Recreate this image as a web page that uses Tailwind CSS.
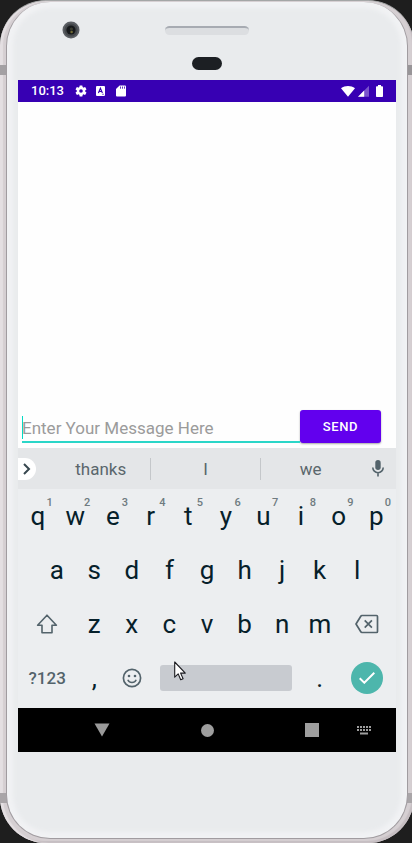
<!DOCTYPE html>
<html lang="en">
<head>
<meta charset="utf-8">
<meta name="viewport" content="width=device-width, initial-scale=1">
<title>Message</title>
<script src="https://cdn.jsdelivr.net/npm/@tailwindcss/browser@4"></script>
</head>
<body class="bg-[#1e1e1e] overflow-x-hidden font-['Roboto','Noto_Sans',sans-serif]">
<!-- Metal frame -->
<div class="relative -mr-0.5 min-h-screen flex flex-col border-t border-[#a4a6a6] rounded-[46px] bg-[#d5cfd2] pl-1.5 pr-1.5 pt-px pb-1 shadow-[inset_3px_0_1px_#e4dfe2,inset_-2px_-2px_1px_#c5bdc1]">
  <span class="absolute left-0 top-16 w-1.5 h-2.5 bg-[#a3a0a3]"></span>
  <span class="absolute right-0 top-16 w-1.5 h-2.5 bg-[#989598]"></span>
  <span class="absolute left-0 bottom-10 w-2 h-2.5 bg-[#a9a5a8]"></span>
  <span class="absolute right-0 bottom-10 w-2 h-2.5 bg-[#a9a5a8]"></span>
  <!-- Front panel -->
  <div class="relative grow flex flex-col rounded-[44px] border-x border-b border-[#a19ca0] bg-[#e9ebed] px-[11px] shadow-[inset_0_0_4px_6px_#f1f2f4]">
    <header class="grid grid-cols-3 h-[78px]">
      <div class="pl-11 pt-[19px]">
        <svg class="size-[18px]" viewBox="0 0 18 18"><circle cx="9" cy="9" r="8.5" fill="#5b5e63"/><circle cx="9" cy="9" r="6.6" fill="#45484c"/><circle cx="9" cy="9" r="4.6" fill="#17191b"/><circle cx="9.4" cy="8" r="1.6" fill="#3b3c30"/><circle cx="9.6" cy="11" r="1.3" fill="#716a35"/></svg>
      </div>
      <div class="flex flex-col items-center pt-6 gap-[22px]">
        <span class="w-[84px] h-[9px] rounded-full bg-[#dcdee1] border-t-2 border-[#a7abb2]"></span>
        <span class="w-[30px] h-[13px] rounded-full bg-[#1c1f23]"></span>
      </div>
    </header>

    <main class="flex flex-col grow">
      <!-- Status bar -->
      <div class="flex items-center h-[22px] bg-[#3700b3] pl-[13px] pr-[13px] text-white">
        <time class="text-[13px] font-medium leading-5 mr-2.5">10:13</time>
        <svg class="size-[14px] mr-2" viewBox="0 0 24 24" fill="#fff"><path d="M19.14 12.94c.04-.3.06-.61.06-.94s-.02-.64-.07-.94l2.03-1.58a.5.5 0 0 0 .12-.61l-1.92-3.32a.49.49 0 0 0-.59-.22l-2.39.96a7 7 0 0 0-1.62-.94l-.36-2.54a.48.48 0 0 0-.48-.41h-3.84a.47.47 0 0 0-.47.41l-.36 2.54c-.59.24-1.13.57-1.62.94l-2.39-.96a.48.48 0 0 0-.59.22L2.74 8.87a.47.47 0 0 0 .12.61l2.03 1.58a6.4 6.4 0 0 0 0 1.88l-2.03 1.58a.5.5 0 0 0-.12.61l1.92 3.32c.12.22.37.29.59.22l2.39-.96c.5.38 1.03.7 1.62.94l.36 2.54c.05.24.24.41.48.41h3.84c.24 0 .44-.17.47-.41l.36-2.54c.59-.24 1.13-.56 1.62-.94l2.39.96c.22.08.47 0 .59-.22l1.92-3.32a.47.47 0 0 0-.12-.61zM12 15.1a3.1 3.1 0 1 1 0-6.200 3.100 3.100 0 0 1 0 6.200z"/></svg>
        <svg class="w-[9px] h-2.5 mr-[11px]" viewBox="0 0 9 10" fill="none" stroke="#3700b3"><rect width="9" height="10" rx="1" fill="#fff" stroke="none"/><path d="M2.4 7 4.4 2.2 6.400 7M3 5.500h2.800M6.400 8.300h1.200" stroke-width="1.100"/></svg>
        <svg class="w-[10px] h-3" viewBox="0 0 10 12"><path d="M3.600.500H9a1 1 0 0 1 1 1v9a1 1 0 0 1-1 1H1a1 1 0 0 1-1-1V4z" fill="#fff"/><path d="M4.500 1.500v2.200M6.500 1.500v2.200M8.500 1.500v2.200" stroke="#3700b3" stroke-width=".8"/></svg>
        <svg class="w-[14px] h-3 ml-auto mr-[3px]" viewBox="0 0 14 12" fill="#fff"><path d="M0 3.200C4 .2 10 .2 14 3.200L7 11.800z"/></svg>
        <svg class="w-[11px] h-3 mr-[7px]" viewBox="0 0 11 12"><path d="M11 .8V11.800H0z" fill="#7a54cd"/><path d="M6.200 5.600v6.200H0z" fill="#fff"/></svg>
        <svg class="w-[7px] h-3" viewBox="0 0 7 12" fill="#fff"><path d="M2 0h3v1.200h1.200a.8.8 0 0 1 .8.8v9.200a.8.8 0 0 1-.8.8H.8a.8.8 0 0 1-.8-.8V2a.8.8 0 0 1 .8-.8H2z"/></svg>
      </div>

      <!-- Conversation and message box -->
      <form class="grow min-h-[346px] bg-[#fefefe] flex items-end pl-1 pr-[15px] pb-[5px]" onsubmit="return false">
        <div class="relative grow h-[27px] border-b-2 border-[#2bd6c8]">
          <span class="absolute left-0 top-0 w-px h-[23px] bg-[#03dac5]"></span>
          <input type="text" aria-label="Message" placeholder="Enter Your Message Here" class="block w-full h-6 bg-transparent text-[17px] leading-6 text-gray-900 placeholder:text-[#9b9b9b] outline-none">
        </div>
        <button type="submit" class="w-[81px] h-[33px] rounded-[3px] bg-[#6200ee] text-white text-[13px] font-medium leading-5 tracking-wider shadow-[0_1px_2px_rgba(0,0,0,0.35)]">SEND</button>
      </form>

      <!-- Suggestions -->
      <div class="flex items-center h-[41px] bg-[#e4e6e8] text-[17px] leading-[22px] text-[#5a666c]">
        <button aria-label="Expand toolbar" class="w-[18px] h-[22px] rounded-r-full bg-white flex items-center justify-center"><svg class="w-2 h-3" viewBox="0 0 8 12" fill="none" stroke="#37474f" stroke-width="2"><path d="M1 1l5 5-5 5"/></svg></button>
        <div class="grow grid grid-cols-[8fr_9fr_8fr] pl-4">
          <button class="h-[22px] border-r border-[#c4c7ca]">thanks</button>
          <button class="h-[22px] border-r border-[#c4c7ca]">I</button>
          <button class="h-[22px]">we</button>
        </div>
        <button aria-label="Voice input" class="w-9 flex justify-center"><svg class="w-3 h-[17px]" viewBox="0 0 12 17"><rect x="3.300" y="0" width="5.400" height="10" rx="2.700" fill="#53636b"/><path d="M.8 7.500a5.200 5.200 0 0 0 10.400 0M6 12.500V16.500" fill="none" stroke="#53636b" stroke-width="1.600"/></svg></button>
      </div>

      <!-- Keyboard -->
      <div class="bg-[#eceef0] px-px pb-[3px] text-[26px] leading-8 text-[#06202a]">
        <div class="grid grid-cols-10 h-[54px]">
          <button class="relative">q<sup class="absolute right-0 top-2 w-3.5 text-[11px] leading-3 font-medium text-[#6f7b80]">1</sup></button>
          <button class="relative">w<sup class="absolute right-0 top-2 w-3.5 text-[11px] leading-3 font-medium text-[#6f7b80]">2</sup></button>
          <button class="relative">e<sup class="absolute right-0 top-2 w-3.5 text-[11px] leading-3 font-medium text-[#6f7b80]">3</sup></button>
          <button class="relative">r<sup class="absolute right-0 top-2 w-3.5 text-[11px] leading-3 font-medium text-[#6f7b80]">4</sup></button>
          <button class="relative">t<sup class="absolute right-0 top-2 w-3.5 text-[11px] leading-3 font-medium text-[#6f7b80]">5</sup></button>
          <button class="relative">y<sup class="absolute right-0 top-2 w-3.5 text-[11px] leading-3 font-medium text-[#6f7b80]">6</sup></button>
          <button class="relative">u<sup class="absolute right-0 top-2 w-3.5 text-[11px] leading-3 font-medium text-[#6f7b80]">7</sup></button>
          <button class="relative">i<sup class="absolute right-0 top-2 w-3.5 text-[11px] leading-3 font-medium text-[#6f7b80]">8</sup></button>
          <button class="relative">o<sup class="absolute right-0 top-2 w-3.5 text-[11px] leading-3 font-medium text-[#6f7b80]">9</sup></button>
          <button class="relative">p<sup class="absolute right-0 top-2 w-3.5 text-[11px] leading-3 font-medium text-[#6f7b80]">0</sup></button>
        </div>
        <div class="grid grid-cols-9 h-[54px] px-[19px]">
          <button>a</button><button>s</button><button>d</button><button>f</button><button>g</button><button>h</button><button>j</button><button>k</button><button>l</button>
        </div>
        <div class="grid grid-cols-20 h-[54px]">
          <button aria-label="Shift" class="col-span-3 flex items-center justify-center"><svg class="w-[22px] h-5" viewBox="0 0 22 20" fill="none" stroke="#53636b" stroke-width="1.600" stroke-linejoin="round"><path d="M11 1.200 1.600 11.200H6v7.600h10v-7.600h4.400z"/></svg></button>
          <button class="col-span-2">z</button><button class="col-span-2">x</button><button class="col-span-2">c</button><button class="col-span-2">v</button><button class="col-span-2">b</button><button class="col-span-2">n</button><button class="col-span-2">m</button>
          <button aria-label="Backspace" class="col-span-3 flex items-center justify-center"><svg class="w-6 h-5" viewBox="0 0 24 20" fill="none" stroke="#53636b" stroke-width="1.700" stroke-linejoin="round"><path d="M7 1.500h14.500a1 1 0 0 1 1 1v15a1 1 0 0 1-1 1H7a1.500 1.500 0 0 1-1.200-.7L1 10l4.800-7.800A1.500 1.500 0 0 1 7 1.500z"/><path d="m9.700 6.400 7.200 7.200m0-7.200-7.200 7.200"/></svg></button>
        </div>
        <div class="grid grid-cols-20 h-[54px]">
          <button class="col-span-3 text-[17px] leading-6 font-medium text-[#53636b]">?123</button>
          <button class="col-span-2">,</button>
          <button aria-label="Emoji" class="col-span-2 flex items-center justify-center"><svg class="size-5" viewBox="0 0 20 20"><circle cx="10" cy="10" r="8.600" fill="none" stroke="#53636b" stroke-width="1.700"/><circle cx="7" cy="8" r="1.300" fill="#53636b"/><circle cx="13" cy="8" r="1.300" fill="#53636b"/><path d="M5.800 11.800a4.600 4.600 0 0 0 8.400 0" fill="none" stroke="#53636b" stroke-width="1.500"/></svg></button>
          <div class="relative col-span-8 flex items-center px-[9px]">
            <button aria-label="Space" class="w-full h-[26px] rounded-[3px] bg-[#c8cbd0]"></button>
            <svg class="absolute left-[23px] top-[10px] w-3 h-5 pointer-events-none" viewBox="0 0 12 20"><path d="M.7 1v15.200l3.500-3.300 2.500 5.800 2.400-1-2.500-5.600h4.700z" fill="#fff" stroke="#1a1a1f" stroke-width="1.100" stroke-linejoin="round"/></svg>
          </div>
          <button class="col-span-2">.</button>
          <button aria-label="Done" class="col-span-3 flex items-center justify-center"><span class="size-8 rounded-full bg-[#4db6ac] flex items-center justify-center"><svg class="w-4 h-3" viewBox="0 0 16 12" fill="none" stroke="#fff" stroke-width="2"><path d="m.7 6.300 4.600 4.400L15.300.8"/></svg></span></button>
        </div>
      </div>

      <!-- Navigation bar -->
      <nav class="relative grid grid-cols-18 h-11 bg-black">
        <button aria-label="Back" class="col-span-8 flex items-center justify-center"><svg class="w-4 h-[14px]" viewBox="0 0 16 14"><path d="M.500.500h15L8 13.500z" fill="#9a9a9a"/></svg></button>
        <button aria-label="Home" class="col-span-2 flex items-center justify-center"><span class="size-[13px] rounded-full bg-[#9e9e9e]"></span></button>
        <button aria-label="Overview" class="col-span-8 flex items-center justify-center"><span class="size-[14px] bg-[#9e9e9e]"></span></button>
        <button aria-label="Switch keyboard" class="absolute right-[25px] inset-y-0 flex items-center"><svg class="w-[14px] h-2.5" viewBox="0 0 14 10"><path d="M0 2h14M0 5h14" stroke="#9e9e9e" stroke-width="2" stroke-dasharray="2 1"/><path d="M3 8.500h8" stroke="#9e9e9e" stroke-width="2"/></svg></button>
      </nav>
    </main>
    <footer class="h-[86px]"></footer>
  </div>
</div>
</body>
</html>
